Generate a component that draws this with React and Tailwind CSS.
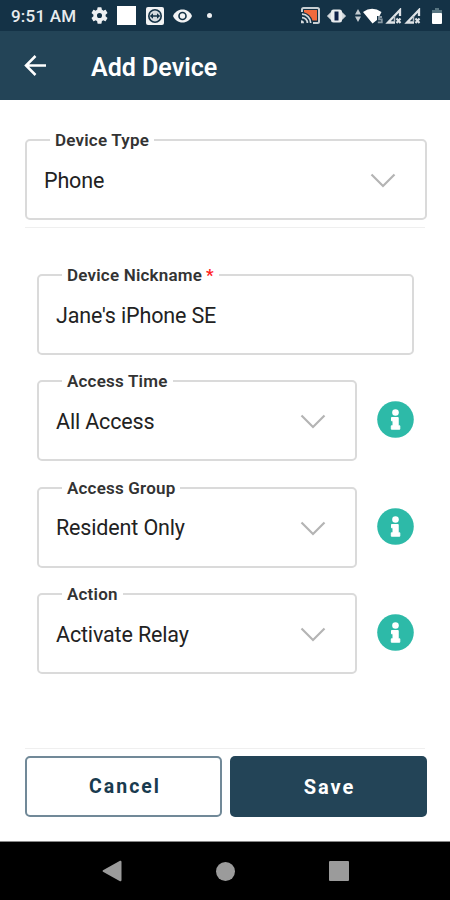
import React from 'react';

const fields = [
    { label: 'Access Time', value: 'All Access' },
    { label: 'Access Group', value: 'Resident Only' },
    { label: 'Action', value: 'Activate Relay' },
];

const StatusBar = () => (
    <div className="h-[31px] bg-[#143246] flex items-center justify-between pl-[11px] pr-[8px] text-white">
        <div className="flex items-center">
            <span className="w-[80px] text-[17px] leading-[20px] font-medium tracking-[0.2px] whitespace-nowrap text-[#e8ecef] pt-px">9:51 AM</span>
            {/* Settings */}
            <svg className="w-[17px] h-[17px]" viewBox="2 2 20 20" fill="#eef0f2">
                <path d="M19.14 12.94a7.1 7.1 0 0 0 0-1.88l2.03-1.58a.5.5 0 0 0 .12-.61l-1.92-3.32a.49.49 0 0 0-.59-.22l-2.39.96a7 7 0 0 0-1.62-.94l-.36-2.54a.48.48 0 0 0-.48-.41h-3.84a.47.47 0 0 0-.47.41l-.36 2.54c-.59.24-1.13.57-1.62.94l-2.39-.96a.48.48 0 0 0-.59.22L2.74 8.87a.47.47 0 0 0 .12.61l2.03 1.58a6 6 0 0 0 0 1.88l-2.03 1.58a.5.5 0 0 0-.12.61l1.92 3.32c.12.22.37.29.59.22l2.39-.96c.5.38 1.03.7 1.62.94l.36 2.54c.05.24.24.41.48.41h3.84c.24 0 .44-.17.47-.41l.36-2.54a6.6 6.6 0 0 0 1.62-.94l2.39.96c.22.08.47 0 .59-.22l1.92-3.32a.47.47 0 0 0-.12-.61zM12 15a3 3 0 1 1 0-6 3 3 0 0 1 0 6z" />
            </svg>
            <div className="w-[19px] h-[19px] bg-white ml-[9px]"></div>
            {/* Remote session */}
            <svg className="w-[18px] h-[18px] ml-[10px]" viewBox="0 0 18 18">
                <rect width="18" height="18" rx="2" fill="#f2f3f4" />
                <circle cx="9" cy="9" r="7" fill="#143246" />
                <circle cx="9" cy="9" r="5.4" fill="#d5dade" />
                <path d="M3.8 9 7 6.2v2h4v-2L14.2 9 11 11.8v-2H7v2z" fill="#143246" />
            </svg>
            {/* Eye */}
            <svg className="w-[19px] h-[14px] ml-[9px]" viewBox="0 0 19 14">
                <path d="M0 7C1.8 3 5.2 .5 9.5 .5S17.2 3 19 7c-1.8 4-5.2 6.5-9.5 6.5S1.8 11 0 7z" fill="#f2f3f4" />
                <circle cx="9.5" cy="7" r="4.3" fill="#143246" />
                <circle cx="9.5" cy="7" r="2.7" fill="#f2f3f4" />
            </svg>
            <div className="w-[5px] h-[5px] rounded-full bg-[#eef0f2] ml-[15px]"></div>
        </div>
        <div className="flex items-center">
            {/* Cast */}
            <svg className="w-[19px] h-[17px]" viewBox="0 0 19 17" fill="none">
                <path d="M1 5V2.5Q1 1 2.5 1h14Q18 1 18 2.5v12q0 1.5-1.5 1.5H12" stroke="#c9cfd3" strokeWidth="2" />
                <path d="M3 3h13v10.5H11.5Q9.5 7 3 5.2z" fill="#f26a3c" />
                <path d="M1 7.2A8.8 8.8 0 0 1 9.7 16M1 10.6A5.4 5.4 0 0 1 6.4 16" stroke="#d5dade" strokeWidth="1.7" />
                <path d="M0 13.2A3 3 0 0 1 3 16.2H0z" fill="#d5dade" />
            </svg>
            {/* Vibrate */}
            <svg className="w-[19px] h-[14px] ml-[7px]" viewBox="0 0 19 14">
                <path d="M4 3.5v7L.5 7zM15 3.5v7L18.5 7z" fill="#d5dade" stroke="#d5dade" strokeLinejoin="round" />
                <rect x="4" y=".5" width="11" height="13" rx="2.5" fill="#e8ebed" />
                <rect x="7.5" y="2.5" width="4" height="9" fill="#0d2048" />
            </svg>
            {/* Wifi with traffic arrows */}
            <svg className="w-[28px] h-[16px] ml-[9px]" viewBox="0 0 28 16">
                <path d="M3 1l3 5.5H0zM3 14L0 8.5h6z" fill="#c4ccd1" />
                <path d="M8 4Q17 -2.5 26.5 4L24.5 8H22v4L17.5 15.5z" fill="#fff" />
                <path d="M27 9h-3v2.3h2.8v3h-4" stroke="#8798a3" strokeWidth="1.8" fill="none" />
            </svg>
            {/* Signal */}
            {[0, 1].map((i) => (
                <svg key={i} className="w-[17px] h-[16px] ml-[2px]" viewBox="0 0 17 16" fill="none">
                    <path d="M15 8V2L3 14.5H10" stroke="#dfe3e6" strokeWidth="2.3" />
                    <path d="M9.5 8v6" stroke="#b5bfc6" strokeWidth="1.5" />
                    <path d="M11.5 10.5l4 4.5M15.5 10.5l-4 4.5" stroke="#dfe3e6" strokeWidth="2" />
                </svg>
            ))}
            {/* Battery */}
            <svg className="w-[10px] h-[16px] ml-[11px]" viewBox="0 0 10 16">
                <path d="M3 0h4v2h3v4H0V2h3z" fill="#587581" />
                <rect y="5" width="10" height="11" rx="1" fill="#fff" />
            </svg>
        </div>
    </div>
);

const Field = ({ label, value, required, select = true, className = '' }) => (
    <div className={`relative h-[81px] border-2 border-[#dadada] rounded-[5px] flex items-center justify-between pl-[17px] pt-[2px] ${className}`}>
        <label className="absolute left-[23px] -top-[11px] h-[20px] bg-white px-[5px] text-[17px] leading-[20px] font-semibold tracking-[0.2px] whitespace-nowrap text-[#333]">
            {label}{required && <span className="text-[#f22] ml-[4px]">*</span>}
        </label>
        <span className="text-[21.5px] leading-[26px] tracking-[-0.15px] whitespace-nowrap text-[#222]">{value}</span>
        {select && (
            <svg className="w-[26px] h-[15px] mr-[29px]" viewBox="0 0 26 15" fill="none" stroke="#b4b4b4" strokeWidth="2.2">
                <path d="M1.5 1.5 13 13 24.5 1.5" />
            </svg>
        )}
    </div>
);

const InfoIcon = () => (
    <svg className="w-[37px] h-[37px] mb-[2px]" viewBox="0 0 37 37">
        <circle cx="18.5" cy="18.5" r="18.3" fill="#2dbaa8" />
        <circle cx="18.5" cy="11.5" r="3.3" fill="#fff" />
        <path d="M14.5 16.5h6.7v8.3h1.6v3.4h-8.5v-3.4h1.7v-5h-1.5z" fill="#fff" stroke="#fff" strokeLinejoin="round" />
    </svg>
);

const App = () => {
    return (
        <div className="w-[450px] h-[900px] flex flex-col bg-white overflow-hidden font-['Roboto',sans-serif]">
            <StatusBar />

            {/* Header */}
            <header className="h-[69px] bg-[#234457] flex items-center pl-[24px] text-white">
                <svg className="w-[23px] h-[21px]" viewBox="0 0 23 21" fill="none" stroke="#fff" strokeWidth="2.5">
                    <path d="M22 10.5H2M11.5 1 2 10.5l9.5 9.5" />
                </svg>
                <h1 className="ml-[44px] pt-[4px] text-[25px] leading-[30px] font-semibold whitespace-nowrap">Add Device</h1>
            </header>

            {/* Form */}
            <main className="flex-1 flex flex-col pt-[39px] px-[25px]">
                <Field label="Device Type" value="Phone" className="w-[402px]" />
                <div className="h-px bg-[#efefef] mt-[7px]"></div>

                <div className="mt-[46px] pl-[12px] flex flex-col gap-[25.4px]">
                    <Field label="Device Nickname" value="Jane's iPhone SE" required select={false} className="w-[377px]" />
                    {fields.map((f) => (
                        <div key={f.label} className="flex items-center gap-[20px]">
                            <Field label={f.label} value={f.value} className="w-[320px]" />
                            <InfoIcon />
                        </div>
                    ))}
                </div>

                <div className="mt-auto mb-[24px]">
                    <div className="h-px bg-[#efefef] mb-[7px]"></div>
                    <div className="flex gap-[8px] w-[402px]">
                        <button className="w-[197px] h-[61px] rounded-[5px] border-2 border-[#718998] pl-[3px] pt-px text-[19.5px] leading-[24px] font-bold tracking-[2px] text-[#193b4f]">Cancel</button>
                        <button className="w-[197px] h-[61px] rounded-[5px] bg-[#234457] pl-[2px] text-[20px] leading-[24px] font-bold tracking-[2px] text-white">Save</button>
                    </div>
                </div>
            </main>

            {/* Android navigation */}
            <nav className="h-[59px] bg-black border-t border-[#888] flex items-center pl-[102px]">
                <svg className="w-[20px] h-[22px]" viewBox="0 0 20 22" fill="#9b9b9b">
                    <path d="M1 10.2 18 .8Q19.5 .3 19.5 2v18q0 1.7-1.5 1.2L1 11.8Q0 11 1 10.2z" />
                </svg>
                <div className="w-[19px] h-[19px] rounded-full bg-[#9b9b9b] ml-[94px]"></div>
                <div className="w-[20px] h-[20px] rounded-[1px] bg-[#9b9b9b] ml-[94px]"></div>
            </nav>
        </div>
    );
};

export default App;
